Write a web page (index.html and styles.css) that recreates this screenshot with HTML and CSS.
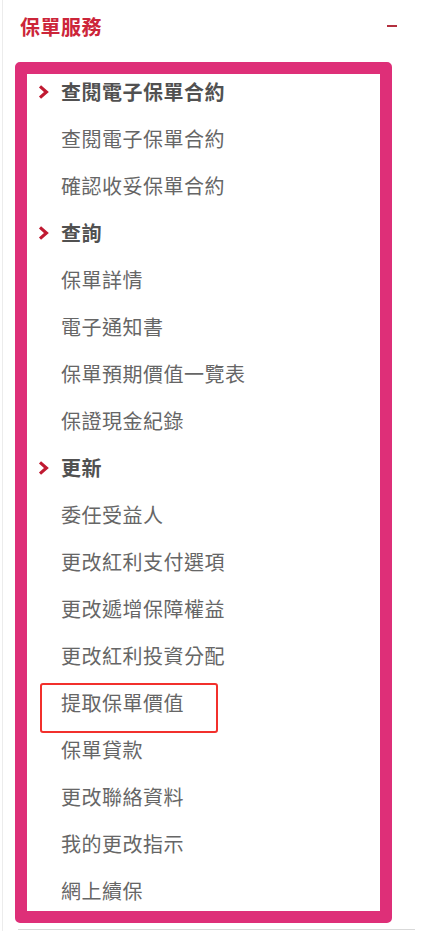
FILE: index.html
```html
<!DOCTYPE html>
<html lang="zh-Hant">
<head>
    <meta charset="UTF-8">
    <meta name="viewport" content="width=device-width, initial-scale=1.0">
    <title>保單服務</title>
    <link rel="stylesheet" href="styles.css">
</head>
<body>
    <div class="page">
        <div class="head">
            <h2 class="title">保單服務</h2>
            <span class="toggle"></span>
        </div>

        <div class="menu">
            <div class="row group"><span class="chev"><svg width="11" height="14" viewBox="0 0 11 14"><path d="M2 1.4 L8.4 7 L2 12.6" fill="none" stroke="#c01a32" stroke-width="3.2"/></svg></span>查閱電子保單合約</div>
            <div class="row">查閱電子保單合約</div>
            <div class="row">確認收妥保單合約</div>

            <div class="row group"><span class="chev"><svg width="11" height="14" viewBox="0 0 11 14"><path d="M2 1.4 L8.4 7 L2 12.6" fill="none" stroke="#c01a32" stroke-width="3.2"/></svg></span>查詢</div>
            <div class="row">保單詳情</div>
            <div class="row">電子通知書</div>
            <div class="row">保單預期價值一覽表</div>
            <div class="row">保證現金紀錄</div>

            <div class="row group"><span class="chev"><svg width="11" height="14" viewBox="0 0 11 14"><path d="M2 1.4 L8.4 7 L2 12.6" fill="none" stroke="#c01a32" stroke-width="3.2"/></svg></span>更新</div>
            <div class="row">委任受益人</div>
            <div class="row">更改紅利支付選項</div>
            <div class="row">更改遞增保障權益</div>
            <div class="row">更改紅利投資分配</div>
            <div class="row marked">提取保單價值</div>
            <div class="row">保單貸款</div>
            <div class="row">更改聯絡資料</div>
            <div class="row">我的更改指示</div>
            <div class="row">網上續保</div>
        </div>

        <div class="rule"></div>
    </div>
</body>
</html>
```

FILE: styles.css
```css
body {
    margin: 0;
    background: #fff;
    font-family: "Noto Sans CJK TC", "Noto Sans", sans-serif;
}

.page {
    margin-left: 2px;
    border-left: 1px solid #ececec;
    min-height: 931px;
    box-sizing: border-box;
    padding-left: 12px;
}

.head {
    display: flex;
    align-items: center;
    justify-content: space-between;
    height: 52px;
    margin-bottom: 10px;
    padding: 0 39px 0 5px;
}
.title {
    margin: 0;
    font-size: 20px;
    font-weight: 700;
    letter-spacing: 0.5px;
    color: #cc2539;
}
.toggle {
    display: block;
    width: 10px;
    height: 2px;
    background: #b3303f;
}

.menu {
    width: 377px;
    box-sizing: border-box;
    border: 12px solid #de2f78;
    border-radius: 5px;
    display: flex;
    flex-direction: column;
    gap: 9px;
}
.row {
    position: relative;
    display: flex;
    align-items: center;
    height: 38px;
    box-sizing: border-box;
    padding: 0 0 4px 34px;
    font-size: 20px;
    letter-spacing: 0.5px;
    color: #666;
}
.row.group {
    padding-left: 11px;
    font-weight: 700;
    color: #515151;
}
.chev {
    display: flex;
    width: 23px;
    margin-top: 2px;
}
.marked::after {
    content: "";
    position: absolute;
    left: 13px;
    top: -2px;
    width: 178px;
    height: 50px;
    box-sizing: border-box;
    border: 2px solid #f2302c;
    border-radius: 3px;
}

.rule {
    margin: 6px 0 0 3px;
    width: 397px;
    height: 1px;
    background: #d9d9d9;
}
```
